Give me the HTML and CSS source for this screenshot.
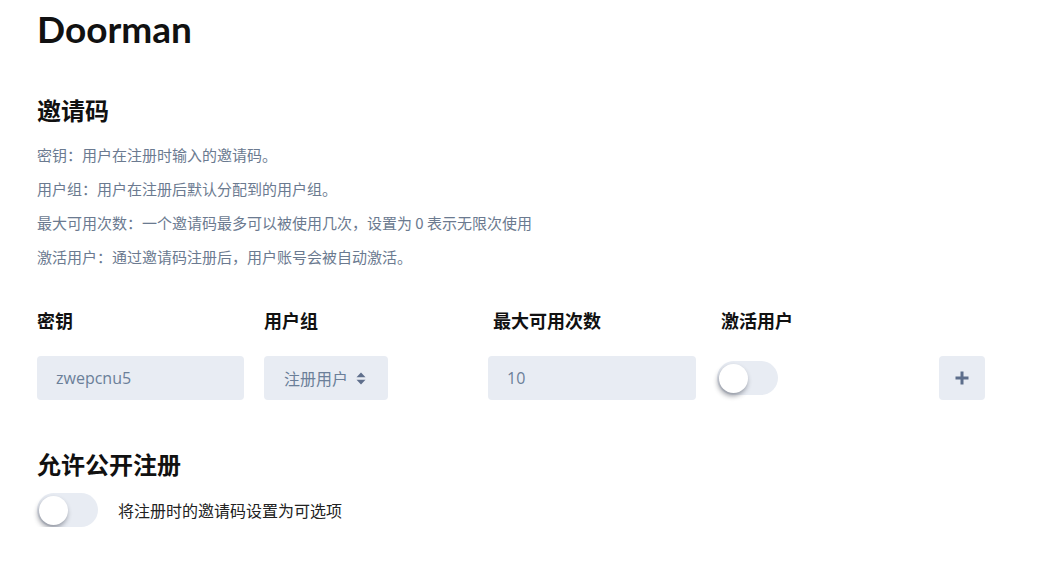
FILE: index.html
```html
<!DOCTYPE html>
<html lang="zh-CN">
<head>
<meta charset="utf-8">
<title>Doorman</title>
<link rel="stylesheet" href="styles.css">
</head>
<body>
<main class="page">
  <h1 class="title">Doorman</h1>

  <h2 class="section-title invite-title">邀请码</h2>
  <p class="desc">密钥：用户在注册时输入的邀请码。</p>
  <p class="desc">用户组：用户在注册后默认分配到的用户组。</p>
  <p class="desc">最大可用次数：一个邀请码最多可以被使用几次，设置为 0 表示无限次使用</p>
  <p class="desc">激活用户：通过邀请码注册后，用户账号会被自动激活。</p>

  <div class="invite-grid">
    <div class="col-label">密钥</div>
    <div class="col-label">用户组</div>
    <div class="col-label shift5">最大可用次数</div>
    <div class="col-label shift4">激活用户</div>
    <div></div>

    <div class="cell"><div class="field key-field">zwepcnu5</div></div>
    <div class="cell">
      <div class="field select-field">
        <span>注册用户</span>
        <svg class="sort-icon" width="10" height="13" viewBox="0 0 10 13">
          <path d="M5 0.5 L9.5 5.2 H0.5 Z" fill="#5f6f8c"/>
          <path d="M5 12.5 L9.5 7.8 H0.5 Z" fill="#5f6f8c"/>
        </svg>
      </div>
    </div>
    <div class="cell"><div class="field num-field">10</div></div>
    <div class="cell"><div class="toggle"><div class="knob"></div></div></div>
    <div class="cell">
      <div class="add-btn">
        <svg width="16" height="16" viewBox="0 0 16 16">
          <path d="M8 1.5 V14.5 M1.5 8 H14.5" stroke="#5d6e8b" stroke-width="3" stroke-linecap="butt"/>
        </svg>
      </div>
    </div>
  </div>

  <h2 class="section-title public-title">允许公开注册</h2>
  <div class="public-row">
    <div class="toggle"><div class="knob"></div></div>
    <span class="public-text">将注册时的邀请码设置为可选项</span>
  </div>
</main>
</body>
</html>
```

FILE: styles.css
```css
* { box-sizing: border-box; }

body {
  margin: 0;
  background: #ffffff;
  font-family: Lato, "Noto Sans CJK SC", sans-serif;
  color: #111;
}

.page {
  padding: 7px 0 0 37px;
  width: 1038px;
}

.title {
  margin: 0;
  font-family: Lato, "Noto Sans CJK SC", sans-serif;
  font-size: 37px;
  line-height: 44px;
  font-weight: 700;
  color: #111;
}

.section-title {
  margin: 0;
  font-family: "Noto Sans CJK SC", sans-serif;
  font-size: 24px;
  line-height: 32px;
  font-weight: 700;
  color: #111;
}

.invite-title { margin-top: 43px; margin-bottom: 19px; }

.desc {
  margin: 0 0 14px 0;
  font-family: "Noto Sans CJK SC", sans-serif;
  font-size: 15px;
  line-height: 20px;
  color: #6b7a90;
}

.invite-grid {
  margin-top: 41px;
  display: grid;
  grid-template-columns: 227px 224px 229px 222px 46px;
  grid-template-rows: 24px 44px;
  row-gap: 24px;
}

.col-label {
  font-family: "Noto Sans CJK SC", sans-serif;
  font-size: 18px;
  line-height: 24px;
  font-weight: 700;
  color: #111;
}
.shift5 { padding-left: 5px; }
.shift4 { padding-left: 4px; }

.cell {
  display: flex;
  align-items: center;
}

.field {
  height: 44px;
  background: #e8ecf3;
  border-radius: 4px;
  display: flex;
  align-items: center;
  font-size: 16px;
  color: #6b7f99;
}

.key-field { width: 207px; padding-left: 19px; font-family: "Open Sans", sans-serif; }
.num-field { width: 208px; padding-left: 19px; font-family: "Open Sans", sans-serif; }

.select-field {
  width: 124px;
  padding-left: 20px;
  gap: 8px;
  font-family: "Noto Sans CJK SC", sans-serif;
}
.sort-icon { display: block; }

.toggle {
  position: relative;
  width: 61px;
  height: 34px;
  border-radius: 17px;
  background: #e8ecf3;
}
.knob {
  position: absolute;
  left: 2px;
  top: 3px;
  width: 29px;
  height: 29px;
  border-radius: 50%;
  background: #fff;
  box-shadow: -1px 3px 5px rgba(40, 45, 60, 0.45);
}

.add-btn {
  width: 46px;
  height: 44px;
  border-radius: 4px;
  background: #e8ecf3;
  display: flex;
  align-items: center;
  justify-content: center;
}

.public-title { margin-top: 48px; }

.public-row {
  margin-top: 13px;
  display: flex;
  align-items: center;
  gap: 20px;
}

.public-text {
  font-family: "Noto Sans CJK SC", sans-serif;
  font-size: 16px;
  line-height: 22px;
  color: #222;
}
```
